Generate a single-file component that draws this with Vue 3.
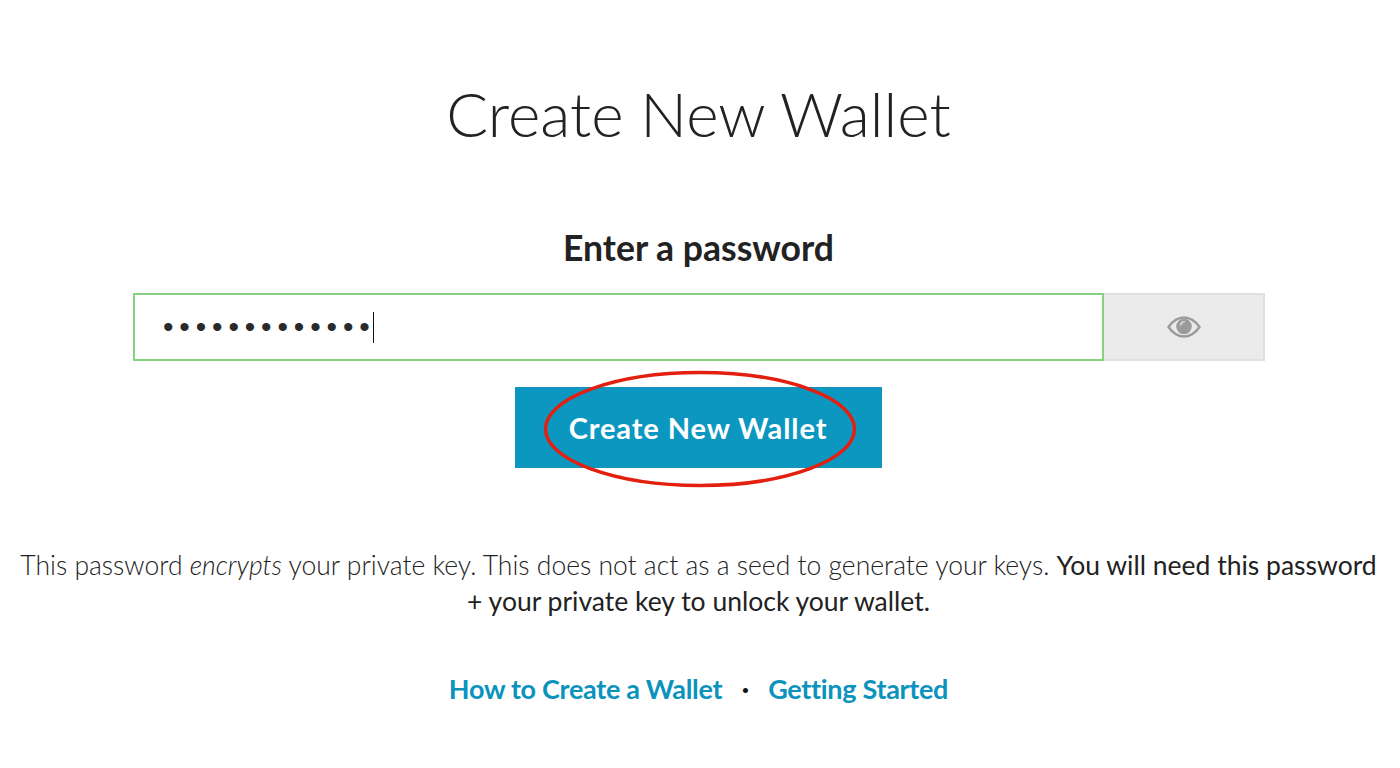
<script setup>
const dots = '•'.repeat(13)
</script>

<template>
  <main class="page">
    <h1 class="title">Create New Wallet</h1>
    <h2 class="label">Enter a password</h2>

    <div class="password">
      <div class="field">
        <span class="dots">{{ dots }}</span>
        <span class="caret"></span>
      </div>
      <div class="toggle">
        <svg width="34" height="24" viewBox="0 0 34 24">
          <path d="M1.500 12C6 5.600 11 2.500 17 2.500S28 5.600 32.500 12C28 18.400 23 21.500 17 21.500S6 18.400 1.500 12Z" fill="none" stroke="#9b9b9b" stroke-width="2.400" />
          <circle cx="17" cy="11.500" r="7.800" fill="#9b9b9b" />
          <path d="M13.500 10.500C13.800 8.300 15.500 6.800 17.800 6.600" fill="none" stroke="#ebebeb" stroke-width="1.300" />
        </svg>
      </div>
    </div>

    <div class="action">
      <button class="create">Create New Wallet</button>
      <svg class="oval" width="314" height="118" viewBox="0 0 314 118">
        <ellipse cx="157" cy="59" rx="154.500" ry="56.500" fill="none" stroke="#e3200f" stroke-width="3.500" />
      </svg>
    </div>

    <p class="note">
      This password <em>encrypts</em> your private key. This does not act as a seed to generate your keys.
      <strong>You will need this password</strong><br />
      <strong>+ your private key to unlock your wallet.</strong>
    </p>

    <nav class="links">
      <a href="#">How to Create a Wallet</a>
      <span class="sep">·</span>
      <a href="#">Getting Started</a>
    </nav>
  </main>
</template>

<style scoped>
.page {
  width: 1397px;
  height: 768px;
  overflow: hidden;
  display: flex;
  flex-direction: column;
  align-items: center;
  font-family: Lato, "Liberation Sans", sans-serif;
  color: #222;
}

.title {
  margin: 75px 0 0;
  font-size: 62px;
  line-height: 76px;
  font-weight: 300;
}

.label {
  margin: 75px 0 0;
  font-size: 35.600px;
  line-height: 44px;
  font-weight: 700;
}

.password {
  margin-top: 23px;
  margin-left: 1px;
  display: flex;
  height: 68px;
  width: 1132px;
}

.field {
  flex: 1;
  display: flex;
  align-items: center;
  padding-left: 28px;
  border: 2px solid #85d27f;
  background: #fff;
}

.dots {
  font-size: 30px;
  line-height: 36px;
  letter-spacing: 5.850px;
  color: #2a2a2a;
  font-family: "Liberation Sans", sans-serif;
}

.caret {
  width: 1.500px;
  height: 31px;
  margin-left: -3px;
  background: #111;
}

.toggle {
  box-sizing: border-box;
  width: 161px;
  display: flex;
  align-items: center;
  justify-content: center;
  background: #ebebeb;
  border: 2px solid #e0e0e0;
  border-left: none;
}

.action {
  position: relative;
  margin-top: 26px;
  margin-left: -1px;
}

.create {
  display: block;
  width: 367px;
  height: 81px;
  border: 1px solid #1a93bc;
  background: #0c97c1;
  color: #fff;
  font-family: inherit;
  font-size: 29px;
  font-weight: 700;
  letter-spacing: 0.900px;
}

.oval {
  position: absolute;
  left: 28px;
  top: -17px;
}

.note {
  margin: 79px 0 0;
  width: 1390px;
  text-align: center;
  font-size: 26.500px;
  line-height: 36px;
  font-weight: 300;
}

.note strong {
  font-weight: 400;
}

.links {
  margin-top: 51px;
  display: flex;
  align-items: center;
  font-size: 27px;
  line-height: 38px;
  font-weight: 700;
  letter-spacing: -0.300px;
}

.links a {
  color: #0c93bd;
  text-decoration: none;
}

.sep {
  width: 46px;
  text-align: center;
  color: #111;
}
</style>
